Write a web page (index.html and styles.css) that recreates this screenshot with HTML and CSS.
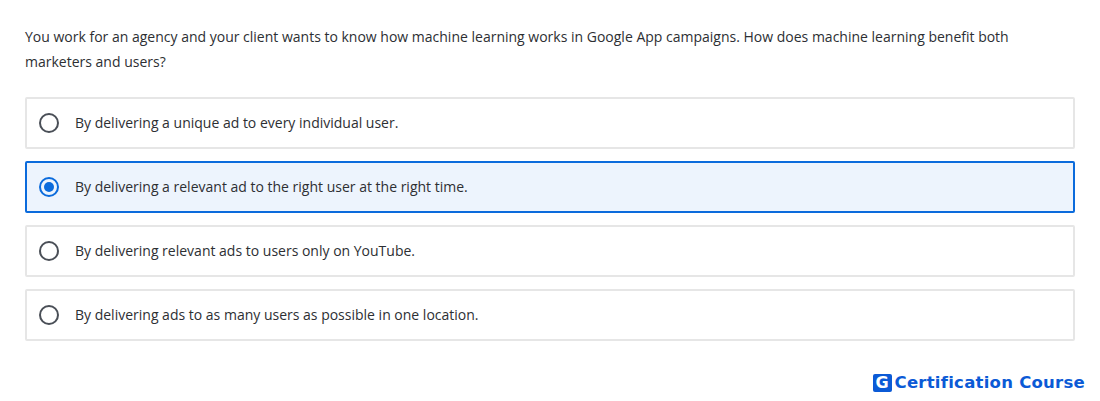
FILE: index.html
```html
<!DOCTYPE html>
<html lang="en">
<head>
<meta charset="utf-8">
<title>Question</title>
<link rel="stylesheet" href="styles.css">
</head>
<body>
<main class="quiz">
  <p class="question">You work for an agency and your client wants to know how machine learning works in Google App campaigns. How does machine learning benefit both marketers and users?</p>
  <div class="options">
    <div class="option"><span class="radio"></span><span class="label">By delivering a unique ad to every individual user.</span></div>
    <div class="option selected"><span class="radio"></span><span class="label">By delivering a relevant ad to the right user at the right time.</span></div>
    <div class="option"><span class="radio"></span><span class="label">By delivering relevant ads to users only on YouTube.</span></div>
    <div class="option"><span class="radio"></span><span class="label">By delivering ads to as many users as possible in one location.</span></div>
  </div>
  <div class="brand"><span class="logo">G</span><span class="brand-text">Certification Course</span></div>
</main>
</body>
</html>
```
FILE: styles.css
```css
* { box-sizing: border-box; }
html, body { margin: 0; padding: 0; background: #fff; }
body { width: 1100px; height: 401px; overflow: hidden; font-family: "Open Sans", sans-serif; color: #2d2f33; }
.quiz { padding: 24px 25px 0; }
.question { margin: 0; font-size: 14px; line-height: 25px; width: 1000px; }
.options { margin-top: 23px; display: flex; flex-direction: column; gap: 12px; }
.option { height: 52px; border: 2px solid #e6e6e6; border-radius: 2px; display: flex; align-items: center; gap: 16px; padding-left: 12px; font-size: 14px; }
.label { line-height: 20px; }
.radio { width: 20px; height: 20px; border: 2.5px solid #4a4f57; border-radius: 50%; flex: none; display: flex; align-items: center; justify-content: center; }
.selected { background: #edf4fd; border-color: #0b6bdc; }
.selected .radio { border-color: #0b6bdc; }
.selected .radio::after { content: ""; width: 10px; height: 10px; border-radius: 50%; background: #0b6bdc; }
.brand { display: flex; align-items: center; justify-content: flex-end; gap: 3px; margin: 32px -10px 0 0; color: #0b5ad6; }
.logo { width: 19px; height: 18px; background: #0b5ad6; color: #fff; font: 700 16px/18px "DejaVu Sans", sans-serif; text-align: center; border-radius: 2px; }
.brand-text { font: 700 16.5px/20px "DejaVu Sans", sans-serif; letter-spacing: 0.25px; }
```
